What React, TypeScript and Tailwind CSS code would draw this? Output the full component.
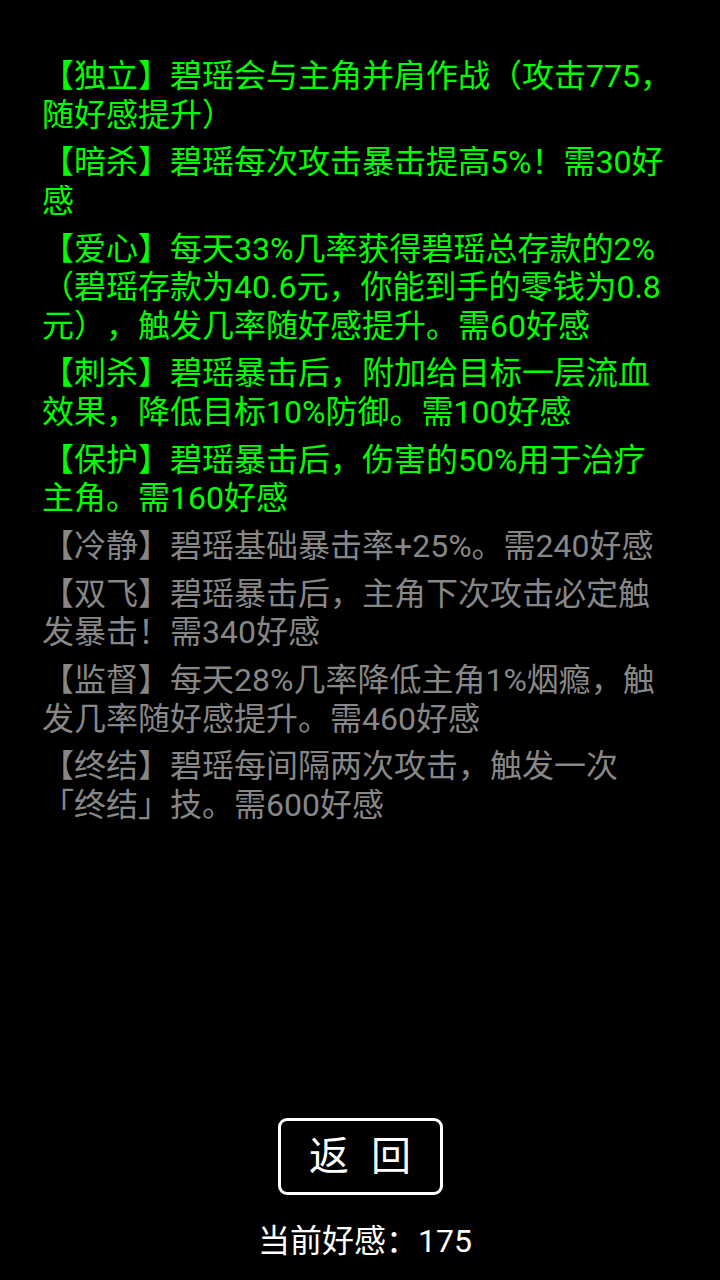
import React from "react";

type Perk = { text: string; unlocked: boolean };

const perks: Perk[] = [
  { text: "【独立】碧瑶会与主角并肩作战（攻击775，随好感提升）", unlocked: true },
  { text: "【暗杀】碧瑶每次攻击暴击提高5%！需30好感", unlocked: true },
  {
    text: "【爱心】每天33%几率获得碧瑶总存款的2%（碧瑶存款为40.6元，你能到手的零钱为0.8元），触发几率随好感提升。需60好感",
    unlocked: true,
  },
  { text: "【刺杀】碧瑶暴击后，附加给目标一层流血效果，降低目标10%防御。需100好感", unlocked: true },
  { text: "【保护】碧瑶暴击后，伤害的50%用于治疗主角。需160好感", unlocked: true },
  { text: "【冷静】碧瑶基础暴击率+25%。需240好感", unlocked: false },
  { text: "【双飞】碧瑶暴击后，主角下次攻击必定触发暴击！需340好感", unlocked: false },
  { text: "【监督】每天28%几率降低主角1%烟瘾，触发几率随好感提升。需460好感", unlocked: false },
  { text: "【终结】碧瑶每间隔两次攻击，触发一次「终结」技。需600好感", unlocked: false },
];

export default function App() {
  return (
    <div className="flex h-[1280px] w-[720px] flex-col bg-black font-['Roboto','Noto_Sans_CJK_SC',sans-serif] [text-spacing-trim:space-all]">
      <ul className="flex flex-col gap-[9.3px] pl-[42px] pr-[46px] pt-[57px]">
        {perks.map((perk, index) => (
          <li
            key={index}
            className={`text-[32px] leading-[38.5px] ${
              perk.unlocked ? "text-[#00ff00]" : "text-[#878787]"
            }`}
          >
            {perk.text}
          </li>
        ))}
      </ul>
      <div className="flex-1" />
      <div className="flex flex-col items-center pb-[20px]">
        <button className="flex h-[77px] w-[165px] items-center justify-center rounded-[9px] border-[3px] border-white text-[40px] text-white [word-spacing:12px]">
          返 回
        </button>
        <div className="mt-[27px] pl-[10px] text-[32px] leading-[38px] text-white">当前好感：175</div>
      </div>
    </div>
  );
}
